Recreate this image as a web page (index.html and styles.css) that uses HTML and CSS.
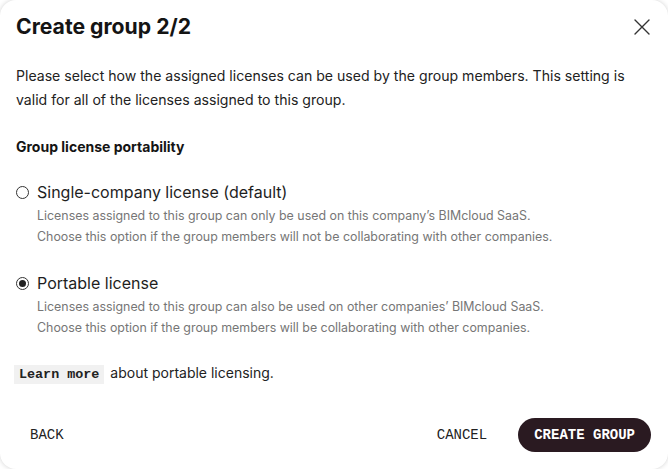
FILE: index.html
```html
<!DOCTYPE html>
<html lang="en">
<head>
<meta charset="utf-8">
<title>Create group 2/2</title>
<link rel="stylesheet" href="styles.css">
</head>
<body>
<div class="dialog">
  <header class="dialog-header">
    <h1 class="title">Create group 2/2</h1>
    <button class="close" aria-label="Close">
      <svg width="16" height="16" viewBox="0 0 16 16"><path d="M1 1 L15 15 M15 1 L1 15" stroke="#333" stroke-width="1.4" fill="none" stroke-linecap="round"/></svg>
    </button>
  </header>
  <main class="dialog-body">
    <p class="intro">Please select how the assigned licenses can be used by the group members. This setting is valid for all of the licenses assigned to this group.</p>
    <h2 class="section-title">Group license portability</h2>
    <div class="option">
      <div class="option-label"><span class="radio"></span>Single-company license (default)</div>
      <div class="option-desc">Licenses assigned to this group can only be used on this company’s BIMcloud SaaS.<br>Choose this option if the group members will not be collaborating with other companies.</div>
    </div>
    <div class="option">
      <div class="option-label"><span class="radio checked"></span>Portable license</div>
      <div class="option-desc">Licenses assigned to this group can also be used on other companies’ BIMcloud SaaS.<br>Choose this option if the group members will be collaborating with other companies.</div>
    </div>
    <p class="learn"><code class="learn-link">Learn more</code> about portable licensing.</p>
  </main>
  <footer class="dialog-footer">
    <button class="btn">BACK</button>
    <div class="spacer"></div>
    <button class="btn">CANCEL</button>
    <button class="btn primary">CREATE GROUP</button>
  </footer>
</div>
</body>
</html>
```
FILE: styles.css
```css
html, body {
  margin: 0;
  padding: 0;
  background: #fff;
}
body {
  width: 668px;
  height: 469px;
  overflow: hidden;
  font-family: Inter, "Noto Sans", sans-serif;
  color: #1e1e1e;
}
.dialog {
  box-sizing: border-box;
  width: 668px;
  height: 469px;
  border-radius: 16px;
  background: #fff;
  box-shadow: 0 0 5px rgba(0,0,0,0.18);
  display: flex;
  flex-direction: column;
}
.dialog-header {
  display: flex;
  align-items: center;
  justify-content: space-between;
  padding: 14px 18px 0 16px;
}
.title {
  margin: 0;
  font-size: 21.2px;
  line-height: 24px;
  font-weight: 700;
  color: #141414;
}
.close {
  border: 0;
  background: none;
  padding: 0;
  width: 16px;
  height: 16px;
  display: flex;
  margin-top: 2px;
}
.dialog-body {
  padding: 26px 16px 0;
}
.intro {
  margin: 0;
  font-size: 14.1px;
  line-height: 24px;
  color: #222;
}
.section-title {
  margin: 25px 0 0;
  font-size: 14px;
  line-height: 20px;
  font-weight: 700;
  color: #141414;
}
.option {
  margin-top: 23px;
}
.option + .option {
  margin-top: 24px;
}
.option-label {
  display: flex;
  align-items: center;
  font-size: 16px;
  line-height: 24px;
  color: #1e1e1e;
}
.radio {
  box-sizing: border-box;
  width: 13px;
  height: 13px;
  border: 1.4px solid #333;
  border-radius: 50%;
  margin-right: 8px;
  display: flex;
  align-items: center;
  justify-content: center;
}
.radio.checked::after {
  content: "";
  width: 7px;
  height: 7px;
  border-radius: 50%;
  background: #222;
}
.option-desc {
  margin-top: 1px;
  padding-left: 21px;
  font-size: 12.4px;
  line-height: 21px;
  color: #767676;
}
.learn {
  margin: 24px 0 0;
  font-size: 14px;
  line-height: 22px;
  color: #222;
}
.learn-link {
  font-family: "Liberation Mono", monospace;
  font-weight: 700;
  font-size: 13.4px;
  background: #f1f1f1;
  padding: 2px 5px;
  margin-left: -2px;
  margin-right: 2px;
  color: #222;
}
.dialog-footer {
  margin-top: auto;
  display: flex;
  align-items: center;
  padding: 0 17px 17px 16px;
}
.spacer {
  flex: 1;
}
.btn {
  font-family: "Liberation Mono", monospace;
  font-size: 14px;
  height: 34px;
  padding: 0 15px 0 14px;
  border: 0;
  background: none;
  color: #222;
  border-radius: 17px;
  cursor: pointer;
}
.btn + .btn {
  margin-left: 16px;
}
.btn.primary {
  background: #2a1a21;
  color: #fff;
  font-weight: 700;
  padding: 0 16px;
}
```
